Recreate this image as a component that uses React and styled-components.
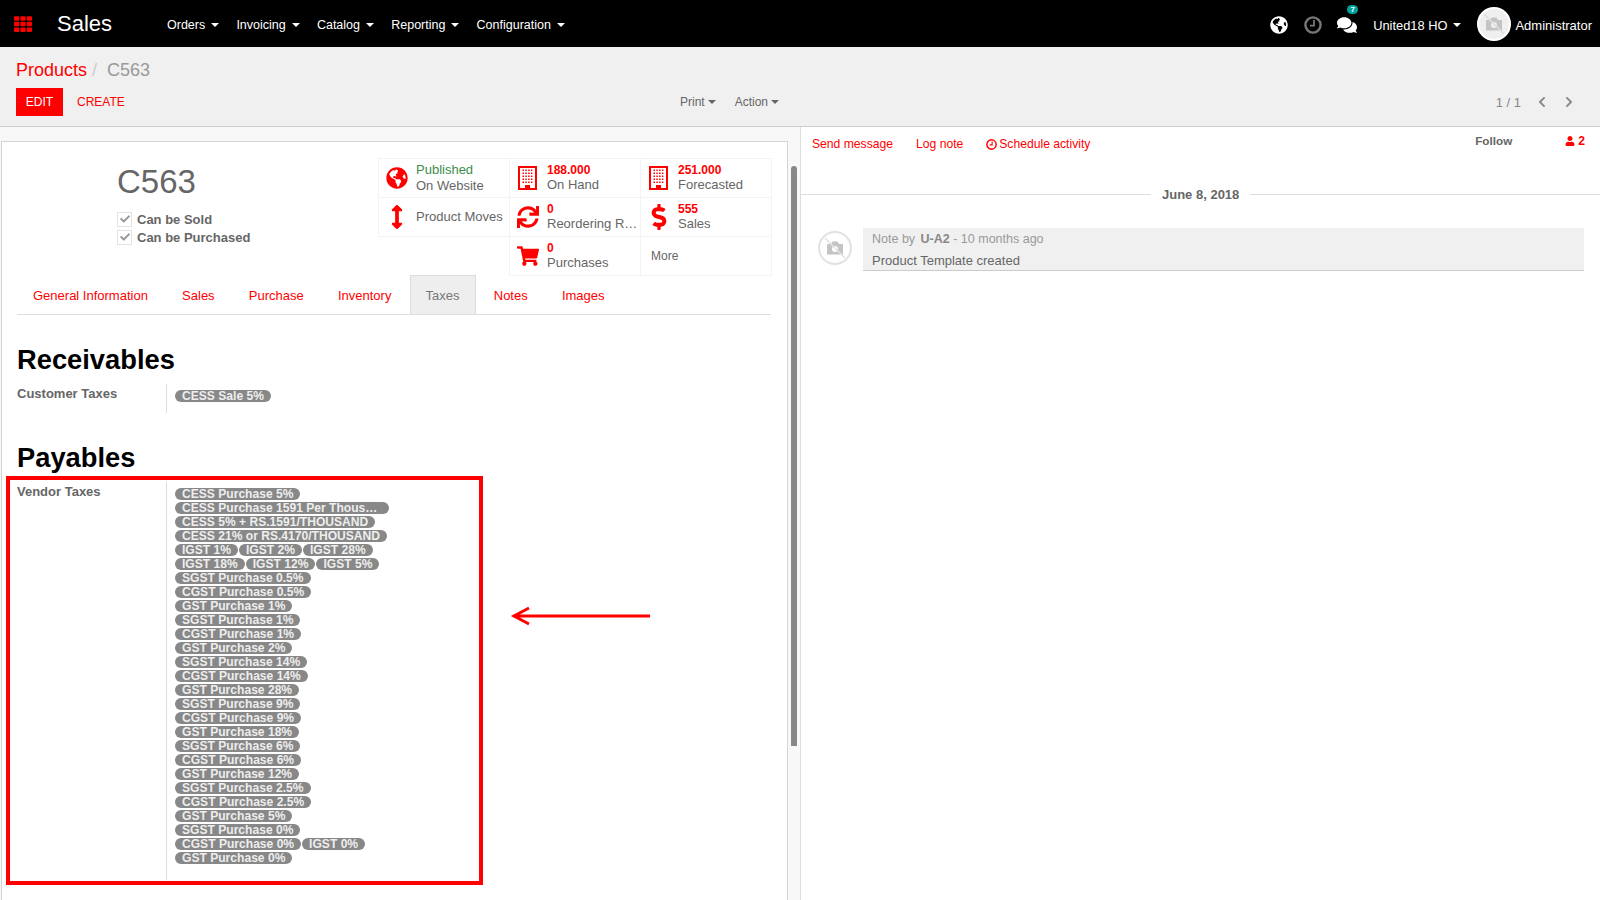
import React from "react"
import styled, { createGlobalStyle } from "styled-components"
import {
  FaArrowsAltV,
  FaCheck,
  FaChevronLeft,
  FaChevronRight,
  FaComments,
  FaDollarSign,
  FaGlobeAmericas,
  FaShoppingCart,
  FaSync,
  FaTh,
  FaUser,
} from "react-icons/fa"

const RED = "#ff0000"

const GlobalStyle = createGlobalStyle`
  html, body { margin: 0; padding: 0; height: 100%; }
  body {
    font-family: "Liberation Sans", Arial, sans-serif;
    font-size: 13px;
    color: #666;
    background: #fff;
  }
  * { box-sizing: border-box; }
`

const Page = styled.div`
  position: relative;
  height: 900px;
  overflow: hidden;
  display: flex;
  flex-direction: column;
`

/* top bar */
const NavBar = styled.header`
  height: 47px;
  flex: none;
  background: #000;
  color: #fff;
  display: flex;
  align-items: center;
  padding: 0 8px 0 14px;
`

const AppsIcon = styled(FaTh)`
  color: ${RED};
  font-size: 18px;
  margin-right: 25px;
`

const Brand = styled.div`
  font-size: 22px;
  width: 110px;
`

const MenuItem = styled.div`
  display: flex;
  align-items: center;
  font-size: 12.5px;
  margin-right: 17.2px;
  padding-top: 2px;
`

const Caret = styled.span`
  width: 0;
  height: 0;
  margin-left: ${(p) => p.gap ?? 6}px;
  border-top: 4px solid ${(p) => p.color || "#fff"};
  border-left: 4px solid transparent;
  border-right: 4px solid transparent;
`

const NavRight = styled.div`
  margin-left: auto;
  padding-top: 3px;
  display: flex;
  align-items: center;
`

const NavIcon = styled.span`
  position: relative;
  display: flex;
  font-size: ${(p) => p.size || 18}px;
  color: ${(p) => p.color || "#fff"};
  margin-right: ${(p) => p.gap}px;
`

const Badge = styled.span`
  position: absolute;
  top: -10px;
  right: -1px;
  width: 11px;
  height: 9px;
  border-radius: 5px;
  background: #00a09d;
  color: #fff;
  font-size: 8px;
  font-weight: bold;
  line-height: 9px;
  text-align: center;
`

const CompanyName = styled.span`
  font-size: 12.85px;
`

const UserName = styled.span`
  margin-left: 4px;
`

/* control panel */
const ControlPanel = styled.div`
  height: 80px;
  flex: none;
  background: #f0f0f0;
  border-bottom: 1px solid #ccc;
  padding: 13px 16px 0;
`

const Breadcrumb = styled.div`
  font-size: 18px;
  line-height: 20px;
  color: #999;
  display: flex;
`

const Crumb = styled.span`
  color: ${RED};
`

const Slash = styled.span`
  color: #ccc;
  margin: 0 10px 0 5px;
`

const ControlRow = styled.div`
  margin-top: 8px;
  display: flex;
  align-items: center;
`

const EditButton = styled.div`
  width: 47px;
  height: 28px;
  background: ${RED};
  color: #fff;
  font-size: 12px;
  display: flex;
  align-items: center;
  justify-content: center;
`

const CreateButton = styled.div`
  color: ${RED};
  font-size: 12px;
  margin-left: 14px;
  width: 603px;
`

const ActionMenu = styled.div`
  display: flex;
  align-items: center;
  font-size: 12px;
  margin-right: 19px;
`

const Pager = styled.div`
  margin-left: auto;
  margin-right: 9px;
  display: flex;
  align-items: center;
  color: #888;
  font-size: 13px;
  svg { font-size: 12px; margin-left: 15px; color: #888; }
`

/* main panes */
const Main = styled.main`
  flex: 1;
  min-height: 0;
  display: flex;
`

const LeftPane = styled.section`
  width: 800px;
  flex: none;
  display: flex;
  padding: 14px 0 0 1px;
  gap: 3px;
  background: #f8f8f8;
`

const Sheet = styled.div`
  width: 787px;
  height: 900px;
  flex: none;
  border: 1px solid #d4d4d4;
  border-bottom: 0;
  padding: 16px 16px 0 15px;
  background: #fff;
`

const ScrollBar = styled.div`
  width: 6px;
  height: 580px;
  margin-top: 25px;
  background: #888;
  border-radius: 4px 4px 0 0;
`

const SheetHead = styled.div`
  height: 117px;
  display: flex;
  justify-content: space-between;
`

const TitleBlock = styled.div`
  padding: 5px 0 0 100px;
`

const Title = styled.h1`
  margin: 0;
  font-size: 33px;
  line-height: 38px;
  font-weight: normal;
  color: #666;
`

const CheckRow = styled.label`
  display: flex;
  align-items: center;
  height: 18px;
  font-weight: bold;
`

const CheckFirst = styled.div`
  margin-top: 9px;
`

const CheckBox = styled.span`
  width: 15px;
  height: 15px;
  border: 1px solid #e3e3e3;
  display: flex;
  align-items: center;
  justify-content: center;
  margin-right: 5px;
  color: #999;
  font-size: 10px;
`

const StatGrid = styled.div`
  width: 394px;
  display: grid;
  grid-template-columns: repeat(3, 131px);
  grid-auto-rows: 39px;
  margin-right: -1px;
`

const StatCell = styled.div`
  border: 1px solid #f3f3f3;
  margin: 0 -1px -1px 0;
  padding-bottom: 1px;
  display: flex;
  align-items: center;
`

const StatIconBox = styled.span`
  width: 37px;
  padding-right: 2px;
  flex: none;
  display: flex;
  justify-content: center;
  color: ${RED};
  font-size: ${(p) => p.size || 22}px;
`

const StatText = styled.div`
  line-height: 15px;
  min-width: 0;
  white-space: nowrap;
`

const StatValue = styled.div`
  color: ${(p) => (p.green ? "#3c8c4c" : RED)};
  font-weight: ${(p) => (p.green ? "normal" : "bold")};
  font-size: ${(p) => (p.green ? 13 : 12)}px;
  line-height: ${(p) => (p.green ? 16 : 14)}px;
`

const MoreCell = styled(StatCell)`
  padding: 0 0 0 10px;
  font-size: 12px;
`

const Tabs = styled.nav`
  display: flex;
  height: 40px;
  border-bottom: 1px solid #ddd;
`

const Tab = styled.div`
  padding: 0 15px;
  margin-right: 2.2px;
  display: flex;
  align-items: center;
  color: ${(p) => (p.active ? "#777" : RED)};
  background: ${(p) => (p.active ? "#eee" : "transparent")};
  border: 1px solid ${(p) => (p.active ? "#ddd" : "transparent")};
  border-bottom: 0;
`

const SectionTitle = styled.h2`
  margin: ${(p) => p.top}px 0 8px;
  font-size: 27.3px;
  line-height: 32px;
  font-weight: bold;
  color: #000;
`

const FieldRow = styled.div`
  display: grid;
  grid-template-columns: 149px 1fr;
  min-height: ${(p) => p.height}px;
`

const FieldLabel = styled.div`
  font-weight: bold;
  line-height: 18px;
  padding-top: 1px;
  color: #666;
`

const FieldValue = styled.div`
  border-left: 1px solid #ddd;
  padding: 6px 0 0 8px;
  display: flex;
  flex-wrap: wrap;
  align-content: flex-start;
  gap: 2px 3px;
`

const TagRow = styled.div`
  width: 100%;
  display: flex;
  gap: 1px;
`

const Tag = styled.span`
  display: block;
  height: 12px;
  padding: 0 ${(p) => (p.cut ? 12 : 7)}px 0 7px;
  border-radius: 6px;
  background: #888;
  color: #eee;
  font-size: 12.08px;
  font-weight: bold;
  line-height: 12px;
  white-space: nowrap;
`

/* chatter */
const Chatter = styled.aside`
  flex: 1;
  min-width: 0;
  border-left: 1px solid #ddd;
`

const ComposerBar = styled.div`
  height: 52px;
  padding: 0 15px 0 11px;
  display: flex;
  align-items: flex-start;
  font-size: 12.15px;
`

const ComposerLink = styled.span`
  display: flex;
  align-items: center;
  color: ${RED};
  margin: 10px 23px 0 0;
  svg { margin-right: 2px; }
`

const FollowLabel = styled.span`
  margin: 7px 0 0 auto;
  font-size: 11.7px;
  font-weight: bold;
  color: #666;
`

const Followers = styled.span`
  margin: 7px 0 0 53px;
  display: flex;
  align-items: center;
  font-weight: bold;
  color: ${RED};
  svg { font-size: 10px; margin-right: 3px; }
`

const DateSep = styled.div`
  display: flex;
  align-items: center;
  gap: 11px;
  height: 30px;
  font-weight: bold;
  color: #666;
  &::before, &::after {
    content: "";
    height: 1px;
    background: #ddd;
    flex: 1;
  }
  &::before { flex: none; width: 350px; }
`

const Message = styled.div`
  margin: 19px 16px 0 17px;
  display: flex;
  gap: 11px;
  align-items: flex-start;
`

const NoteBox = styled.div`
  flex: 1;
  height: 43px;
  background: #f0f0f0;
  border-bottom: 1px solid #ccc;
  padding: 1px 9px 0;
  line-height: 21px;
`

const NoteMeta = styled.div`
  font-size: 12.5px;
  color: #999;
  b { color: #888; margin-left: 2px; }
`

const AvatarWrap = styled.span`
  display: flex;
  flex: none;
  margin: ${(p) => p.top || 0}px 0 0 ${(p) => p.left || 0}px;
`

/* annotation drawn over the screenshot */
const Overlay = styled.div`
  position: absolute;
  left: 6px;
  top: 476px;
  width: 477px;
  height: 409px;
  border: 4px solid ${RED};
`

const Arrow = styled.svg`
  position: absolute;
  left: 509px;
  top: 602px;
`

const Avatar = ({ size, soft }) => (
  <svg width={size} height={size} viewBox="0 0 34 34">
    <circle cx="17" cy="17" r="16" fill={soft ? "#fff" : "#efefef"} stroke={soft ? "#e2e2e2" : "#fff"} strokeWidth="2" />
    <path d="M9 13h4l1.5-2.5h5L21 13h4v10.5H9z" fill="#c4c4c4" />
    <circle cx="17" cy="18" r="3" fill={soft ? "#fff" : "#efefef"} />
    <path d="M7 7l20 20" stroke={soft ? "#e2e2e2" : "#dedede"} strokeWidth="1.5" />
  </svg>
)

const ClockIcon = ({ size, color }) => (
  <svg width={size} height={size} viewBox="0 0 18 18" fill="none" stroke={color} strokeWidth="2.4">
    <circle cx="9" cy="9" r="7.6" />
    <path d="M10 4v5.6H6" strokeWidth="1.8" />
  </svg>
)

const BuildingIcon = () => {
  const windows = []
  for (let row = 0; row < 5; row++) {
    for (let col = 0; col < 4; col++) {
      windows.push(<rect key={`${row}-${col}`} x={4.5 + col * 2.8} y={3.5 + row * 3} width="1.5" height="1.5" />)
    }
  }
  return (
    <svg width="19" height="24" viewBox="0 0 19 24" fill={RED}>
      <path d="M0 0h19v24H0zM2 2v20h15V2z" fillRule="evenodd" />
      {windows}
      <path d="M7 19h5v4H7z" />
    </svg>
  )
}

const Stat = ({ icon, size, value, label, green }) => (
  <StatCell>
    <StatIconBox size={size}>{icon}</StatIconBox>
    <StatText>
      {value && <StatValue green={green}>{value}</StatValue>}
      {label}
    </StatText>
  </StatCell>
)

const menu = ["Orders", "Invoicing", "Catalog", "Reporting", "Configuration"]
const tabs = ["General Information", "Sales", "Purchase", "Inventory", "Taxes", "Notes", "Images"]

const vendorTaxes = [
  ["CESS Purchase 5%"],
  ["CESS Purchase 1591 Per Thous…"],
  ["CESS 5% + RS.1591/THOUSAND"],
  ["CESS 21% or RS.4170/THOUSAND"],
  ["IGST 1%", "IGST 2%", "IGST 28%"],
  ["IGST 18%", "IGST 12%", "IGST 5%"],
  ["SGST Purchase 0.5%"],
  ["CGST Purchase 0.5%"],
  ["GST Purchase 1%"],
  ["SGST Purchase 1%"],
  ["CGST Purchase 1%"],
  ["GST Purchase 2%"],
  ["SGST Purchase 14%"],
  ["CGST Purchase 14%"],
  ["GST Purchase 28%"],
  ["SGST Purchase 9%"],
  ["CGST Purchase 9%"],
  ["GST Purchase 18%"],
  ["SGST Purchase 6%"],
  ["CGST Purchase 6%"],
  ["GST Purchase 12%"],
  ["SGST Purchase 2.5%"],
  ["CGST Purchase 2.5%"],
  ["GST Purchase 5%"],
  ["SGST Purchase 0%"],
  ["CGST Purchase 0%", "IGST 0%"],
  ["GST Purchase 0%"],
]

export default function App() {
  return (
    <Page>
      <GlobalStyle />
      <NavBar>
        <AppsIcon />
        <Brand>Sales</Brand>
        {menu.map((item) => (
          <MenuItem key={item}>
            {item}
            <Caret />
          </MenuItem>
        ))}
        <NavRight>
          <NavIcon gap={16}><FaGlobeAmericas /></NavIcon>
          <NavIcon gap={15}><ClockIcon size={18} color="#777" /></NavIcon>
          <NavIcon gap={16} size={20}>
            <FaComments />
            <Badge>7</Badge>
          </NavIcon>
          <CompanyName>United18 HO</CompanyName>
          <Caret />
          <AvatarWrap top={-3} left={16}><Avatar size={34} /></AvatarWrap>
          <UserName>Administrator</UserName>
        </NavRight>
      </NavBar>

      <ControlPanel>
        <Breadcrumb>
          <Crumb>Products</Crumb>
          <Slash>/</Slash>
          C563
        </Breadcrumb>
        <ControlRow>
          <EditButton>EDIT</EditButton>
          <CreateButton>CREATE</CreateButton>
          <ActionMenu>Print<Caret gap={3} color="#666" /></ActionMenu>
          <ActionMenu>Action<Caret gap={3} color="#666" /></ActionMenu>
          <Pager>
            1 / 1
            <FaChevronLeft />
            <FaChevronRight />
          </Pager>
        </ControlRow>
      </ControlPanel>

      <Main>
        <LeftPane>
          <Sheet>
            <SheetHead>
              <TitleBlock>
                <Title>C563</Title>
                <CheckFirst>
                  <CheckRow><CheckBox><FaCheck /></CheckBox>Can be Sold</CheckRow>
                  <CheckRow><CheckBox><FaCheck /></CheckBox>Can be Purchased</CheckRow>
                </CheckFirst>
              </TitleBlock>
              <StatGrid>
                <Stat icon={<FaGlobeAmericas />} value="Published" label="On Website" green />
                <Stat icon={<BuildingIcon />} value="188.000" label="On Hand" />
                <Stat icon={<BuildingIcon />} value="251.000" label="Forecasted" />
                <Stat icon={<FaArrowsAltV />} size={24} label="Product Moves" />
                <Stat icon={<FaSync />} value="0" label="Reordering R…" />
                <Stat icon={<FaDollarSign />} size={26} value="555" label="Sales" />
                <span />
                <Stat icon={<FaShoppingCart />} value="0" label="Purchases" />
                <MoreCell>More</MoreCell>
              </StatGrid>
            </SheetHead>
            <Tabs>
              {tabs.map((tab) => (
                <Tab key={tab} active={tab === "Taxes"}>{tab}</Tab>
              ))}
            </Tabs>
            <SectionTitle top={29}>Receivables</SectionTitle>
            <FieldRow height={29}>
              <FieldLabel>Customer Taxes</FieldLabel>
              <FieldValue><Tag>CESS Sale 5%</Tag></FieldValue>
            </FieldRow>
            <SectionTitle top={29}>Payables</SectionTitle>
            <FieldRow height={398}>
              <FieldLabel>Vendor Taxes</FieldLabel>
              <FieldValue>
                {vendorTaxes.map((row) => (
                  <TagRow key={row[0]}>
                    {row.map((tax) => <Tag key={tax} cut={tax.endsWith("…")}>{tax}</Tag>)}
                  </TagRow>
                ))}
              </FieldValue>
            </FieldRow>
          </Sheet>
          <ScrollBar />
        </LeftPane>

        <Chatter>
          <ComposerBar>
            <ComposerLink>Send message</ComposerLink>
            <ComposerLink>Log note</ComposerLink>
            <ComposerLink><ClockIcon size={11} color={RED} />Schedule activity</ComposerLink>
            <FollowLabel>Follow</FollowLabel>
            <Followers><FaUser />2</Followers>
          </ComposerBar>
          <DateSep>June 8, 2018</DateSep>
          <Message>
            <AvatarWrap top={3}><Avatar size={34} soft /></AvatarWrap>
            <NoteBox>
              <NoteMeta>Note by <b>U-A2</b> - 10 months ago</NoteMeta>
              Product Template created
            </NoteBox>
          </Message>
        </Chatter>
      </Main>

      <Overlay />
      <Arrow width="146" height="28" viewBox="0 0 146 28">
        <path d="M4 14h137M20 6L5 14l15 8" fill="none" stroke={RED} strokeWidth="3" />
      </Arrow>
    </Page>
  )
}
